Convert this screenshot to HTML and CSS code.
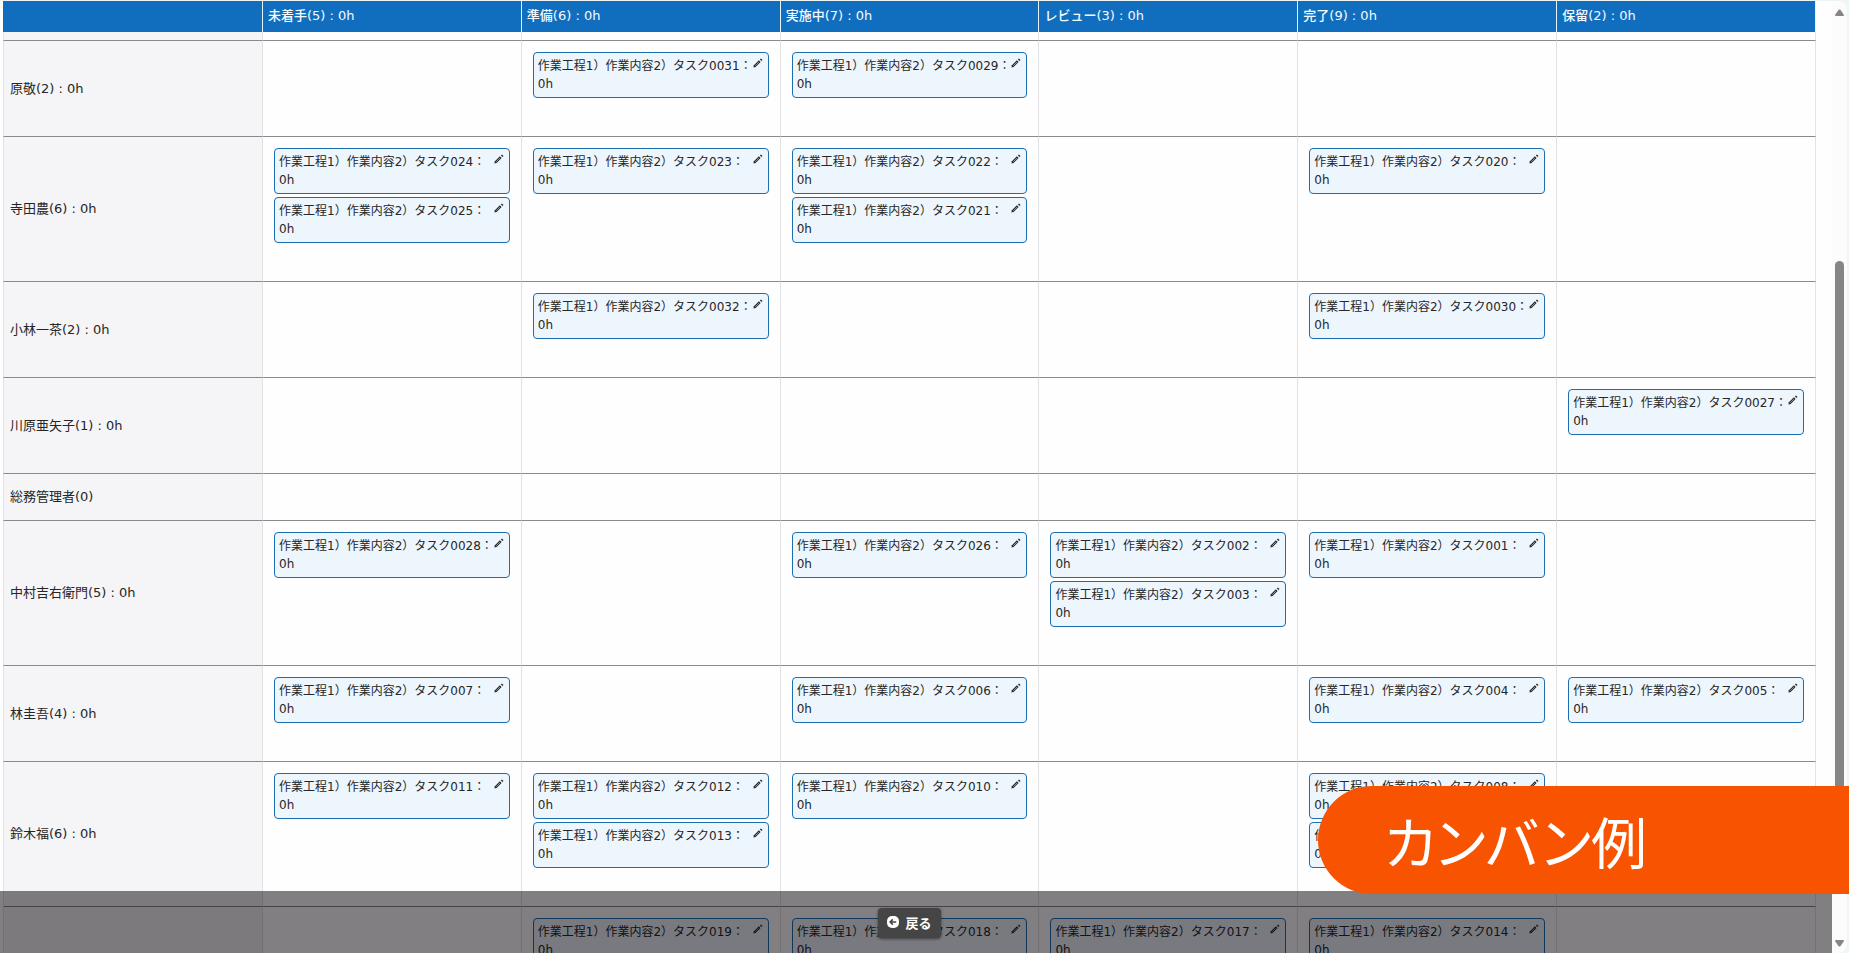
FILE: index.html
```html
<!DOCTYPE html>
<html lang="ja">
<head>
<meta charset="utf-8">
<title>カンバン例</title>
<link rel="stylesheet" href="styles.css">
</head>
<body>
<svg class="sprite" aria-hidden="true">
  <symbol id="pen" viewBox="0 0 10 10">
    <path d="M0.4 9.6 0.9 7.3 5.9 2.3 7.6 4 2.6 9Z" fill="currentColor"/>
    <path d="M2.2 7.8 6 4" stroke="#e8f1fb" stroke-width="0.5"/>
    <path d="M6.9 1.5 7.9 0.5 9.5 2.1 8.5 3.1Z" fill="currentColor"/>
  </symbol>
</svg>
<div class="window">
<main class="board">
<table class="kanban">
<thead>
<tr><td class="corner"></td><th scope="col">未着手(5) : 0h</th><th scope="col">準備(6) : 0h</th><th scope="col">実施中(7) : 0h</th><th scope="col">レビュー(3) : 0h</th><th scope="col">完了(9) : 0h</th><th scope="col">保留(2) : 0h</th></tr>
</thead>
<tbody>
<tr class="tail"><td class="side"></td><td></td><td></td><td></td><td></td><td></td><td></td></tr>
<tr>
<th scope="row">原敬(2) : 0h</th>
<td></td>
<td><div class="card"><button class="edit" aria-label="編集"><svg><use href="#pen"/></svg></button>作業工程1）作業内容2）タスク0031：0h</div></td>
<td><div class="card"><button class="edit" aria-label="編集"><svg><use href="#pen"/></svg></button>作業工程1）作業内容2）タスク0029：0h</div></td>
<td></td>
<td></td>
<td></td>
</tr>
<tr>
<th scope="row">寺田農(6) : 0h</th>
<td><div class="card"><button class="edit" aria-label="編集"><svg><use href="#pen"/></svg></button>作業工程1）作業内容2）タスク024：0h</div>
<div class="card"><button class="edit" aria-label="編集"><svg><use href="#pen"/></svg></button>作業工程1）作業内容2）タスク025：0h</div></td>
<td><div class="card"><button class="edit" aria-label="編集"><svg><use href="#pen"/></svg></button>作業工程1）作業内容2）タスク023：0h</div></td>
<td><div class="card"><button class="edit" aria-label="編集"><svg><use href="#pen"/></svg></button>作業工程1）作業内容2）タスク022：0h</div>
<div class="card"><button class="edit" aria-label="編集"><svg><use href="#pen"/></svg></button>作業工程1）作業内容2）タスク021：0h</div></td>
<td></td>
<td><div class="card"><button class="edit" aria-label="編集"><svg><use href="#pen"/></svg></button>作業工程1）作業内容2）タスク020：0h</div></td>
<td></td>
</tr>
<tr>
<th scope="row">小林一茶(2) : 0h</th>
<td></td>
<td><div class="card"><button class="edit" aria-label="編集"><svg><use href="#pen"/></svg></button>作業工程1）作業内容2）タスク0032：0h</div></td>
<td></td>
<td></td>
<td><div class="card"><button class="edit" aria-label="編集"><svg><use href="#pen"/></svg></button>作業工程1）作業内容2）タスク0030：0h</div></td>
<td></td>
</tr>
<tr>
<th scope="row">川原亜矢子(1) : 0h</th>
<td></td>
<td></td>
<td></td>
<td></td>
<td></td>
<td><div class="card"><button class="edit" aria-label="編集"><svg><use href="#pen"/></svg></button>作業工程1）作業内容2）タスク0027：0h</div></td>
</tr>
<tr>
<th scope="row">総務管理者(0)</th>
<td></td>
<td></td>
<td></td>
<td></td>
<td></td>
<td></td>
</tr>
<tr>
<th scope="row">中村吉右衛門(5) : 0h</th>
<td><div class="card"><button class="edit" aria-label="編集"><svg><use href="#pen"/></svg></button>作業工程1）作業内容2）タスク0028：0h</div></td>
<td></td>
<td><div class="card"><button class="edit" aria-label="編集"><svg><use href="#pen"/></svg></button>作業工程1）作業内容2）タスク026：0h</div></td>
<td><div class="card"><button class="edit" aria-label="編集"><svg><use href="#pen"/></svg></button>作業工程1）作業内容2）タスク002：0h</div>
<div class="card"><button class="edit" aria-label="編集"><svg><use href="#pen"/></svg></button>作業工程1）作業内容2）タスク003：0h</div></td>
<td><div class="card"><button class="edit" aria-label="編集"><svg><use href="#pen"/></svg></button>作業工程1）作業内容2）タスク001：0h</div></td>
<td></td>
</tr>
<tr>
<th scope="row">林圭吾(4) : 0h</th>
<td><div class="card"><button class="edit" aria-label="編集"><svg><use href="#pen"/></svg></button>作業工程1）作業内容2）タスク007：0h</div></td>
<td></td>
<td><div class="card"><button class="edit" aria-label="編集"><svg><use href="#pen"/></svg></button>作業工程1）作業内容2）タスク006：0h</div></td>
<td></td>
<td><div class="card"><button class="edit" aria-label="編集"><svg><use href="#pen"/></svg></button>作業工程1）作業内容2）タスク004：0h</div></td>
<td><div class="card"><button class="edit" aria-label="編集"><svg><use href="#pen"/></svg></button>作業工程1）作業内容2）タスク005：0h</div></td>
</tr>
<tr>
<th scope="row">鈴木福(6) : 0h</th>
<td><div class="card"><button class="edit" aria-label="編集"><svg><use href="#pen"/></svg></button>作業工程1）作業内容2）タスク011：0h</div></td>
<td><div class="card"><button class="edit" aria-label="編集"><svg><use href="#pen"/></svg></button>作業工程1）作業内容2）タスク012：0h</div>
<div class="card"><button class="edit" aria-label="編集"><svg><use href="#pen"/></svg></button>作業工程1）作業内容2）タスク013：0h</div></td>
<td><div class="card"><button class="edit" aria-label="編集"><svg><use href="#pen"/></svg></button>作業工程1）作業内容2）タスク010：0h</div></td>
<td></td>
<td><div class="card"><button class="edit" aria-label="編集"><svg><use href="#pen"/></svg></button>作業工程1）作業内容2）タスク008：0h</div>
<div class="card"><button class="edit" aria-label="編集"><svg><use href="#pen"/></svg></button>作業工程1）作業内容2）タスク009：0h</div></td>
<td></td>
</tr>
<tr>
<th scope="row"></th>
<td></td>
<td><div class="card"><button class="edit" aria-label="編集"><svg><use href="#pen"/></svg></button>作業工程1）作業内容2）タスク019：0h</div></td>
<td><div class="card"><button class="edit" aria-label="編集"><svg><use href="#pen"/></svg></button>作業工程1）作業内容2）タスク018：0h</div></td>
<td><div class="card"><button class="edit" aria-label="編集"><svg><use href="#pen"/></svg></button>作業工程1）作業内容2）タスク017：0h</div></td>
<td><div class="card"><button class="edit" aria-label="編集"><svg><use href="#pen"/></svg></button>作業工程1）作業内容2）タスク014：0h</div></td>
<td></td>
</tr>
</tbody>
</table>
<footer class="commands">
  <button class="back"><svg viewBox="0 0 12 12" aria-hidden="true"><rect width="12" height="12" rx="5" fill="#fff"/><path d="M9.2 6H3.4M5.8 3.4 3.2 6 5.8 8.6" fill="none" stroke="#454545" stroke-width="1.6"/></svg>戻る</button>
</footer>
</main>
<div class="scrollbar" aria-hidden="true">
  <svg viewBox="0 0 9 7"><path d="M3.6 0.8Q4.5 0 5.4 0.8L9 6Q9 7 8 7H1Q0 7 0 6Z" fill="#858585"/></svg>
  <div class="track"><div class="thumb"></div></div>
  <svg viewBox="0 0 9 7"><path d="M3.6 6.2Q4.5 7 5.4 6.2L9 1Q9 0 8 0H1Q0 0 0 1Z" fill="#858585"/></svg>
</div>
</div>
<div class="caption">カンバン例</div>
</body>
</html>
```
FILE: styles.css
```css
* {
  box-sizing: border-box;
}

body {
  margin: 0;
  background: #eef5f5;
  color: #262626;
  font-family: "DejaVu Sans", "Noto Sans CJK JP", sans-serif;
  font-size: 13px;
  line-height: 20px;
}

.sprite {
  position: absolute;
  width: 0;
  height: 0;
}

.window {
  display: flex;
  height: 100vh;
  padding: 1px 2px 0 0;
  overflow: hidden;
}

.board {
  position: relative;
  flex: 1;
  padding: 0 16px 0 3px;
  overflow: hidden;
  background: #fefefe;
}

.kanban {
  width: 100%;
  table-layout: fixed;
  border-collapse: separate;
  border-spacing: 0;
}

.kanban thead th,
.kanban thead td {
  height: 31px;
  padding: 0 5px 2px;
  border-right: 1px solid #e3f4fb;
  background: #116ebe;
  color: #f4fbff;
  font-weight: 500;
  text-align: left;
}

.kanban thead .corner {
  width: 260px;
}

.kanban tbody td {
  padding: 11px 11px 35px;
  border-top: 1px solid #8b898d;
  border-right: 1px solid #e2e2e4;
  vertical-align: top;
}

.kanban tbody th,
.kanban tbody .side {
  padding: 0 6px;
  border-top: 1px solid #8b898d;
  border-right: 1px solid #e2e2e4;
  border-left: 1px solid #e2e2e4;
  background: #f5f4f6;
  font-weight: 400;
  text-align: left;
}

.kanban .tail td {
  height: 8px;
  padding: 0;
  border-top: 0;
}

.card {
  margin-bottom: 3px;
  padding: 4px;
  border: 1px solid #1c6eae;
  border-radius: 4px;
  background: #edf5fd;
  font-size: 12px;
  line-height: 18px;
}

.edit {
  float: right;
  width: 10px;
  height: 12px;
  margin: 0 1px 0 0;
  padding: 1px 0;
  border: 0;
  background: none;
  color: #2b2b2b;
}

.edit svg {
  display: block;
  width: 10px;
  height: 10px;
}

.commands {
  position: absolute;
  right: 0;
  bottom: 0;
  left: 0;
  display: flex;
  justify-content: center;
  padding: 17px 13px 15px 0;
  background: rgba(3, 0, 3, 0.5);
}

.back {
  display: flex;
  align-items: center;
  gap: 6px;
  height: 30px;
  padding: 0 9px 2px;
  border: 0;
  border-radius: 4px;
  background: #454545;
  box-shadow: 0 1px 3px rgba(0, 0, 0, 0.5);
  color: #fff;
  font-family: "Noto Sans CJK JP", sans-serif;
  font-size: 13px;
  font-weight: 700;
}

.back svg {
  width: 12px;
  height: 12px;
}

.scrollbar {
  display: flex;
  flex-direction: column;
  align-items: center;
  width: 15px;
  padding: 8px 0 6px;
  border-radius: 0 8px 8px 0;
  background: #fcfcfc;
}

.scrollbar svg {
  width: 9px;
  height: 7px;
}

.track {
  flex: 1;
  display: flex;
  flex-direction: column;
  width: 9px;
  padding: 245px 0 60px;
}

.thumb {
  flex: 1;
  border-radius: 5px;
  background: #858585;
}

.caption {
  position: absolute;
  right: 0;
  bottom: 59px;
  width: 531px;
  padding: 0 66px;
  border-radius: 54px 0 0 54px;
  background: #f85300;
  color: #fff;
  font-family: "Noto Sans CJK JP", sans-serif;
  font-size: 56px;
  font-feature-settings: "palt";
  line-height: 108px;
  white-space: nowrap;
}
```
